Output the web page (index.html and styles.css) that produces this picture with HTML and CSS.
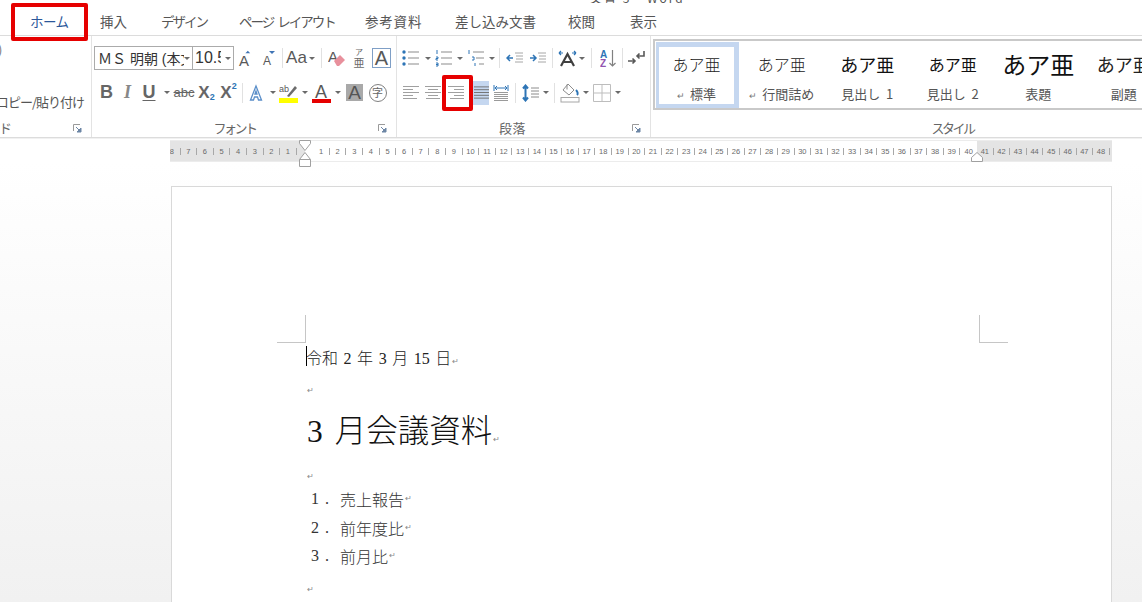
FILE: index.html
```html
<!DOCTYPE html>
<html lang="ja">
<head>
<meta charset="utf-8">
<title>Word</title>
<link rel="stylesheet" href="styles.css">
</head>
<body>
<div class="title"><span>文書 3 - Word</span></div>
<nav class="tabs">
  <span class="tab t-home">ホーム<i class="redbox redbox-tab"></i></span>
  <span class="tab t-ins">挿入</span>
  <span class="tab t-des">デザイン</span>
  <span class="tab t-page">ページ レイアウト</span>
  <span class="tab t-ref">参考資料</span>
  <span class="tab t-mail">差し込み文書</span>
  <span class="tab t-rev">校閲</span>
  <span class="tab t-view">表示</span>
</nav>
<section class="ribbon">
  <div class="group g-clip">
    <div class="clip-top">)</div>
    <div class="clip-copy"><span>書式のコピー/貼り付け</span></div>
    <div class="glabel clip-label"><span>クリップボード</span><svg class="launch" viewBox="0 0 9 9"><use href="#launch"/></svg></div>
  </div>
  <div class="group g-font">
    <div class="row row1 pf1">
      <div class="combo c-font"><span class="combo-text">ＭＳ 明朝 (本文のフォント</span><i class="caret"></i></div>
      <div class="combo c-size"><span class="combo-text">10.5</span><i class="caret"></i></div>
      <span class="c w23"><svg width="16" height="17" viewBox="0 0 16 17"><text x="1" y="16" class="ia ia14">A</text><path d="M8 4l3-3 3 3z" fill="#3f74b5" transform="translate(1 0) scale(.8)"/></svg></span>
      <span class="c w23"><svg width="14" height="16" viewBox="0 0 14 16"><text x="1" y="15" class="ia ia11">A</text><path d="M7 1h6l-3 3z" fill="#3f74b5"/></svg></span>
      <span class="c w4"><i class="sep"></i></span>
      <span class="c w25 aa">Aa</span><span class="c w6"><i class="caret"></i></span>
      <span class="c w12"><i class="sep"></i></span>
      <span class="c w19"><svg width="18" height="18" viewBox="0 0 18 18"><text x="0" y="13" class="ia ia14">A</text><path d="M6 12l6-6 5 5-6 6H9z" fill="#e8909c"/></svg></span>
      <span class="c w26 ruby"><small>ア</small><b>亜</b></span>
      <span class="c w19 boxa">A</span>
    </div>
    <div class="row row2 pf2">
      <span class="c w21 fb">B</span>
      <span class="c w21 fi">I</span>
      <span class="c w22 fu">U</span>
      <span class="c w13"><i class="caret"></i></span>
      <span class="c w22 fs">abc</span>
      <span class="c w23 fx">X<sub>2</sub></span>
      <span class="c w21 fx">X<sup>2</sup></span>
      <span class="c w6"><i class="sep"></i></span>
      <span class="c w22"><svg width="16" height="18" viewBox="0 0 16 18"><path d="M8 2L2.500 16h3l1-3h3l1 3h3zM7 10l1-3 1 3z" fill="#fff" stroke="#5b8fc9" stroke-width="1.300"/></svg></span>
      <span class="c w11"><i class="caret"></i></span>
      <span class="c w21"><svg width="20" height="20" viewBox="0 0 20 20"><text x="0" y="9" class="ia ia9">ab</text><path d="M8 13L16 3l2 2-8 9z" fill="#6d6d6d"/><rect y="15" width="19" height="5" fill="#ffff00"/></svg></span>
      <span class="c w12"><i class="caret"></i></span>
      <span class="c w21"><svg width="20" height="20" viewBox="0 0 20 20"><text x="3" y="15" class="ia ia17">A</text><rect y="16" width="19" height="4" fill="#e60000"/></svg></span>
      <span class="c w11"><i class="caret"></i></span>
      <span class="c w23 shade"><b>A</b></span>
      <span class="c w23"><span class="circle">字</span></span>
    </div>
    <div class="glabel gl-font"><span>フォント</span><svg class="launch" viewBox="0 0 9 9"><use href="#launch"/></svg></div>
  </div>
  <div class="group g-para">
    <div class="row row1 pp">
      <span class="c w26"><svg class="ic" width="18" height="18" viewBox="0 0 18 18"><use href="#bullets"/></svg></span>
      <span class="c w7"><i class="caret"></i></span>
      <span class="c w25"><svg class="ic" width="18" height="18" viewBox="0 0 18 18"><use href="#numbers"/></svg></span>
      <span class="c w7"><i class="caret"></i></span>
      <span class="c w26"><svg class="ic" width="18" height="18" viewBox="0 0 18 18"><use href="#multi"/></svg></span>
      <span class="c w6"><i class="caret"></i></span>
      <span class="c w8"><i class="sep"></i></span>
      <span class="c w24"><svg class="ic" width="18" height="14" viewBox="0 0 18 14"><path d="M7 7h-6m3-3L1 7l3 3" fill="none" stroke="#2e75b6" stroke-width="1.500"/><path d="M9 2h8M10 5h7M10 8h7M9 11h8" stroke="#a6a6a6"/></svg></span>
      <span class="c w21"><svg class="ic" width="18" height="14" viewBox="0 0 18 14"><path d="M1 7h6m-3-3l3 3-3 3" fill="none" stroke="#2e75b6" stroke-width="1.500"/><path d="M9 2h8M10 5h7M10 8h7M9 11h8" stroke="#a6a6a6"/></svg></span>
      <span class="c w8"><i class="sep"></i></span>
      <span class="c w22"><svg width="19" height="17" viewBox="0 0 19 17"><path d="M3 16L9.500 4 16 16M5 12h9" fill="none" stroke="#404040" stroke-width="2.200"/><path d="M1 3h4M1 3l2-2M1 3l2 2M18 3h-4M18 3l-2-2M18 3l-2 2" fill="none" stroke="#2e75b6" stroke-width="1.200"/></svg></span>
      <span class="c w8"><i class="caret"></i></span>
      <span class="c w10"><i class="sep"></i></span>
      <span class="c w24"><svg width="17" height="19" viewBox="0 0 17 19"><text x="0" y="8.500" class="ia az1">A</text><text x="0" y="18" class="ia az2">Z</text><path d="M12.500 1v16m-3-3l3 3 3-3" fill="none" stroke="#808080" stroke-width="1.200"/></svg></span>
      <span class="c w4"><i class="sep"></i></span>
      <span class="c w24"><svg width="19" height="16" viewBox="0 0 19 16"><path d="M17 1v5h-7m2.500-2.500L10 6l2.500 2.500" fill="none" stroke="#595959" stroke-width="1.600"/><path d="M1 11h7M5.500 8.500L8 11l-2.500 2.500" fill="none" stroke="#595959" stroke-width="1.600"/></svg></span>
    </div>
    <div class="row row2 pp">
      <span class="c w25"><svg class="ic" width="16" height="15" viewBox="0 0 16 15"><use href="#al"/></svg></span>
      <span class="c w19"><svg class="ic" width="16" height="15" viewBox="0 0 16 15"><use href="#ac"/></svg></span>
      <span class="c w27"><svg class="ic" width="16" height="15" viewBox="0 0 16 15"><use href="#ar"/></svg></span>
      <span class="c w4"></span>
      <span class="c w16 selbtn"><svg class="ic" width="15" height="15" viewBox="0 0 16 15"><use href="#aj"/></svg></span>
      <span class="c w23"><svg width="16" height="18" viewBox="0 0 16 18"><path d="M1 1v6M15 1v6M2 4h12M4 2L2 4l2 2M12 2l2 2-2 2" fill="none" stroke="#2e75b6"/><path d="M1 8.500h14M1 10.500h14M1 12.500h14M1 14.500h14M1 16.500h14" stroke="#9a9a9a"/></svg></span>
      <span class="c w6"><i class="sep"></i></span>
      <span class="c w25"><svg width="18" height="18" viewBox="0 0 18 18"><path d="M3.500 2v14M1 4.500L3.500 1.500 6 4.500M1 13.500l2.500 3 2.500-3" fill="none" stroke="#2e75b6" stroke-width="2"/><path d="M9 4h8M9 7h8M9 10h8M9 13h8" stroke="#8c8c8c"/></svg></span>
      <span class="c w6"><i class="caret"></i></span>
      <span class="c w10"><i class="sep"></i></span>
      <span class="c w21"><svg width="20" height="20" viewBox="0 0 20 20"><path d="M8 1l6 6-5 5-6-5zM7 1.500v5" fill="#fff" stroke="#8c8c8c"/><path d="M16 7c2 2 2 4 1 5" fill="none" stroke="#2e75b6" stroke-width="2"/><rect x="1" y="14.500" width="18" height="4.500" fill="#fff" stroke="#a6a6a6"/></svg></span>
      <span class="c w12"><i class="caret"></i></span>
      <span class="c w20"><svg width="18" height="18" viewBox="0 0 18 18"><path d="M.5.5h17v17H.5zM9 .5v17M.5 9h17" fill="none" stroke="#bdbdbd"/></svg></span>
      <span class="c w12"><i class="caret"></i></span>
      <i class="redbox redbox-right"></i>
    </div>
    <div class="glabel gl-para"><span>段落</span><svg class="launch" viewBox="0 0 9 9"><use href="#launch"/></svg></div>
  </div>
  <div class="group g-style">
    <div class="gallery">
      <div class="sty sel"><span class="pv pv-m">あア亜</span><span class="lb"><em>↵</em>標準</span></div>
      <div class="sty"><span class="pv pv-m">あア亜</span><span class="lb"><em>↵</em>行間詰め</span></div>
      <div class="sty"><span class="pv pv-h1">あア亜</span><span class="lb">見出し 1</span></div>
      <div class="sty"><span class="pv pv-h2">あア亜</span><span class="lb">見出し 2</span></div>
      <div class="sty"><span class="pv pv-t">あア亜</span><span class="lb">表題</span></div>
      <div class="sty"><span class="pv pv-s">あア亜</span><span class="lb">副題</span></div>
    </div>
    <div class="glabel gl-style"><span>スタイル</span></div>
  </div>
</section>
<div class="ruler-wrap">
  <div class="ruler">
    <div class="rz rz-l"><span>8</span><span>7</span><span>6</span><span>5</span><span>4</span><span>3</span><span>2</span><span>1</span></div>
    <div class="rz rz-m"><span>1</span><span>2</span><span>3</span><span>4</span><span>5</span><span>6</span><span>7</span><span>8</span><span>9</span><span>10</span><span>11</span><span>12</span><span>13</span><span>14</span><span>15</span><span>16</span><span>17</span><span>18</span><span>19</span><span>20</span><span>21</span><span>22</span><span>23</span><span>24</span><span>25</span><span>26</span><span>27</span><span>28</span><span>29</span><span>30</span><span>31</span><span>32</span><span>33</span><span>34</span><span>35</span><span>36</span><span>37</span><span>38</span><span>39</span><span>40</span></div>
    <div class="rz rz-r"><span>41</span><span>42</span><span>43</span><span>44</span><span>45</span><span>46</span><span>47</span><span>48</span></div>
    <svg class="marker marker-l" width="12" height="27" viewBox="0 0 12 27"><path d="M.5.500h11v3L6 10.500.5 3.500zM6 12.500l5.500 7v7H.5v-7zM.5 19.500h11" fill="#fff" stroke="#a0a0a0"/></svg>
    <svg class="marker marker-r" width="12" height="10" viewBox="0 0 12 10"><path d="M6 .5l5.500 5v4H.5v-4z" fill="#fff" stroke="#a0a0a0"/></svg>
  </div>
</div>
<main class="canvas">
  <article class="page">
    <i class="crop crop-l"></i><i class="crop crop-r"></i>
    <p class="line first"><i class="cursor"></i>令和 <span class="num">2</span> 年 <span class="num">3</span> 月 <span class="num">15</span> 日<em class="pm">↵</em></p>
    <p class="line empty e1"><em class="pm">↵</em></p>
    <h1 class="head"><span class="num">3</span> 月会議資料<em class="pm">↵</em></h1>
    <p class="line empty e2"><em class="pm">↵</em></p>
    <ol class="items">
      <li><span class="n">1 .</span>売上報告<em class="pm">↵</em></li>
      <li><span class="n">2 .</span>前年度比<em class="pm">↵</em></li>
      <li><span class="n">3 .</span>前月比<em class="pm">↵</em></li>
    </ol>
    <p class="line empty e3"><em class="pm">↵</em></p>
  </article>
</main>
<svg class="defs" width="0" height="0">
  <defs>
    <g id="launch"><path d="M.5 7V.5H7" fill="none" stroke="#9a9a9a"/><path d="M3 3l4 4M8 4v4H4z" stroke="#6d86a5" fill="#6d86a5"/></g>
    <g id="bullets"><path d="M6 3h11M6 9h11M6 15h11" stroke="#8c8c8c" stroke-width="1.200"/><circle cx="2" cy="3" r="1.700" fill="#2e75b6"/><circle cx="2" cy="9" r="1.700" fill="#2e75b6"/><circle cx="2" cy="15" r="1.700" fill="#2e75b6"/></g>
    <g id="numbers"><path d="M6 3h11M6 9h11M6 15h11" stroke="#8c8c8c" stroke-width="1.200"/><path d="M2 1v4M1 8h2v1.500H1V11h2M1 14h2v3H1M1 15.500h2" fill="none" stroke="#2e75b6"/></g>
    <g id="multi"><path d="M6 3h11M9 9h8M12 15h5" stroke="#8c8c8c" stroke-width="1.200"/><path d="M2 1v4M5 8h2v3H5M8 14v3" fill="none" stroke="#2e75b6"/></g>
    <g id="al"><path d="M0 1.500h16M0 4.500h10M0 7.500h16M0 10.500h10M0 13.500h14" stroke="#a0a0a0"/></g>
    <g id="ac"><path d="M0 1.500h16M3 4.500h10M0 7.500h16M3 10.500h10M1 13.500h14" stroke="#a0a0a0"/></g>
    <g id="ar"><path d="M0 1.500h16M6 4.500h10M0 7.500h16M6 10.500h10M2 13.500h14" stroke="#a0a0a0"/></g>
    <g id="aj"><path d="M0 1.500h16M0 4.500h16M0 7.500h16M0 10.500h16M0 13.500h16" stroke="#6f6f6f"/></g>
  </defs>
</svg>
</body>
</html>
```
FILE: styles.css
```css
* { box-sizing: border-box; }
html, body { margin: 0; padding: 0; width: 1142px; height: 602px; overflow: hidden; background: #fff; }
body { font-family: "Noto Sans CJK JP", "Liberation Sans", sans-serif; color: #444; display: flex; flex-direction: column; position: relative; }
.defs { position: absolute; }
em { font-style: normal; }

.title { height: 3px; overflow: hidden; position: relative; flex: none; }
.title span { position: absolute; left: 590px; top: -9px; font-size: 12px; line-height: 14px; color: #555; white-space: pre; letter-spacing: 2px; }

.tabs { height: 33px; flex: none; display: flex; align-items: center; border-bottom: 1px solid #dcdcdc; font-size: 13.500px; color: #555; padding-top: 4px; }
.tab { white-space: nowrap; position: relative; flex: none; }
.t-home { margin-left: 30px; width: 36px; color: #2b579a; letter-spacing: -.5px; }
.t-ins { margin-left: 34px; width: 27px; }
.t-des { margin-left: 34px; width: 46px; letter-spacing: -2px; }
.t-page { margin-left: 32px; width: 94px; letter-spacing: -2px; word-spacing: 3px; }
.t-ref { margin-left: 32px; width: 57px; letter-spacing: .8px; }
.t-mail { margin-left: 33px; width: 80px; }
.t-rev { margin-left: 33px; width: 28px; }
.t-view { margin-left: 34px; width: 28px; }

.redbox { position: absolute; border: 4px solid #e60000; border-radius: 2px; display: block; }
.redbox-tab { left: -19px; top: -8px; width: 77px; height: 38px; }
.redbox-right { left: 45px; top: -5px; width: 31px; height: 36px; }

.ribbon { height: 102px; flex: none; display: flex; border-bottom: 1px solid #dcdcdc; box-shadow: 0 1px 0 #f1f1f1; }
.group { position: relative; display: flex; flex-direction: column; flex: none; border-right: 1px solid #e3e3e3; }
.g-clip { width: 92px; overflow: hidden; }
.g-font { width: 305px; }
.g-para { width: 254px; }
.g-style { flex: 1; min-width: 0; border-right: 0; }

.row { display: flex; align-items: center; flex: none; position: relative; }
.row1 { height: 24px; margin-top: 10px; }
.row2 { height: 25px; margin-top: 10px; }
.pf1 { padding-left: 2px; }
.pf2 { padding-left: 4px; }
.pp { padding-left: 1px; }

.c { display: flex; align-items: center; justify-content: center; flex: none; height: 100%; }
.w4 { width: 4px; } .w6 { width: 6px; } .w7 { width: 7px; } .w8 { width: 8px; } .w10 { width: 10px; }
.w11 { width: 11px; } .w12 { width: 12px; } .w13 { width: 13px; } .w16 { width: 16px; } .w19 { width: 19px; }
.w20 { width: 20px; } .w21 { width: 21px; } .w22 { width: 22px; } .w23 { width: 23px; } .w24 { width: 24px; }
.w25 { width: 25px; } .w26 { width: 26px; } .w27 { width: 27px; }

.caret { display: block; width: 0; height: 0; border-left: 3px solid transparent; border-right: 3px solid transparent; border-top: 3px solid #6a6a6a; flex: none; }
.sep { display: block; width: 1px; height: 20px; background: #e1e1e1; flex: none; }

.combo { height: 24px; border: 1px solid #ababab; display: flex; align-items: center; background: #fff; overflow: hidden; flex: none; position: relative; color: #333; font-family: "Liberation Sans", "Noto Sans CJK JP", sans-serif; }
.combo .caret { position: absolute; right: 2px; top: 10px; }
.c-font { width: 99px; font-size: 14px; padding-left: 3px; }
.c-size { width: 42px; font-size: 16px; padding-left: 2px; margin-left: -1px; }
.combo-text { white-space: nowrap; overflow: hidden; display: block; }
.c-font .combo-text { width: 86px; }
.c-size .combo-text { width: 26px; }

.ia { font-family: "Liberation Sans", sans-serif; fill: #595959; }
.ia14 { font-size: 15px; } .ia11 { font-size: 12px; } .ia9 { font-size: 9px; } .ia17 { font-size: 18px; }
.az1 { font-size: 10px; fill: #2e75b6; font-weight: 700; }
.az2 { font-size: 10px; fill: #9254b0; font-weight: 700; }
.aa { font: 17px "Liberation Sans", sans-serif; color: #595959; }
.ruby { flex-direction: column; line-height: 1; color: #6a6a6a; }
.ruby small { font-size: 8px; height: 8px; line-height: 8px; }
.ruby b { font-size: 11px; font-weight: 400; height: 11px; line-height: 11px; margin-top: 1px; }
.boxa { height: 20px; border: 1px solid #7f9fc6; font: 20px "Liberation Sans", sans-serif; color: #595959; }

.fb, .fi, .fu, .fx, .fs { font-family: "Liberation Sans", sans-serif; color: #666; }
.fb { font-size: 18px; font-weight: 700; }
.fi { font-size: 18px; font-weight: 700; font-style: italic; color: #888; font-family: "Liberation Serif", serif; }
.fu { font-size: 18px; font-weight: 700; text-decoration: underline; text-underline-offset: 2px; }
.fs { font-size: 13px; text-decoration: line-through; }
.fx { font-size: 17px; font-weight: 700; }
.fx sub, .fx sup { font-size: 9px; color: #2e75b6; line-height: 9px; }
.fx sub { transform: translateY(5px); }
.fx sup { transform: translateY(-6px); }
.shade b { width: 17px; height: 17px; background: #a9a9a9; color: #555; font: 19px/17px "Liberation Sans", sans-serif; text-align: center; display: block; }
.circle { width: 18px; height: 18px; border: 1px solid #808080; border-radius: 50%; font-size: 11px; line-height: 15px; text-align: center; color: #666; display: block; }
.selbtn { background: #c5d7f0; height: 24px; }

.glabel { margin-top: auto; height: 20px; display: flex; align-items: center; justify-content: center; position: relative; font-size: 13px; color: #666; }
.gl-font { padding-right: 19px; letter-spacing: -2.500px; }
.gl-para { padding-right: 22px; letter-spacing: .5px; }
.gl-style { padding-left: 112px; letter-spacing: -2.500px; }
.launch { position: absolute; right: 9px; top: 7px; width: 9px; height: 9px; }

.clip-top { position: absolute; left: -2px; top: 6px; font-size: 13px; line-height: 16px; color: #777; }
.clip-copy { position: absolute; right: 7px; top: 57px; font-size: 13px; line-height: 18px; color: #555; white-space: nowrap; letter-spacing: -1px; }
.clip-label { justify-content: flex-end; }
.clip-label span { position: absolute; right: 79px; white-space: nowrap; }

.gallery { margin: 3px 0 0 2px; height: 71px; border: 1px solid #c9c9c9; border-width: 2px 0 2px 2px; display: flex; overflow: hidden; padding: 1px 0 0 1px; flex: none; }
.sty { flex: 0 0 85.500px; height: 66px; display: flex; flex-direction: column; align-items: center; padding-top: 6px; color: #444; }
.sty.sel { flex-basis: 83px; border: solid #c5d7f0; border-width: 5px 5px 4px 3px; padding-top: 1px; }
.pv { height: 32px; line-height: 32px; white-space: nowrap; color: #222; flex: none; }
.pv-m { font-size: 16px; font-weight: 300; }
.pv-h1 { font-size: 18px; color: #111; }
.pv-h2 { font-size: 16px; color: #111; }
.pv-t { font-size: 24px; color: #111; }
.pv-s { font-size: 18px; color: #222; }
.lb { font-size: 13px; line-height: 18px; margin-top: 5px; white-space: nowrap; color: #555; word-spacing: 3px; }
.lb em { font-size: 9px; margin-right: 5px; color: #777; }

.ruler-wrap { height: 22px; margin-top: 2px; padding-left: 170px; flex: none; }
.ruler { width: 942px; height: 22px; display: flex; position: relative; background: #fff; border: solid #ececec; border-width: 1px 0; font: 7.500px/7px "Liberation Sans", sans-serif; color: #6a6a6a; }
.rz { display: flex; align-items: center; overflow: hidden; flex: none; height: 100%; }
.rz span { flex: 0 0 16.600px; height: 7px; text-align: center; border-right: 1px solid #a8a8a8; }
.rz-l { width: 135px; background: #e4e4e4; justify-content: flex-end; padding-right: 8.300px; }
.rz-m { width: 672px; padding-left: 8.300px; }
.rz-m span:last-child { border-right: 0; }
.rz-r { width: 135px; background: #e4e4e4; }
.marker { position: absolute; }
.marker-l { left: 129px; top: -1px; }
.marker-r { left: 801px; top: 11px; }

.canvas { flex: 1; min-height: 0; padding: 24px 30px 0 171px; background: linear-gradient(#ffffff, #f1f1f1); overflow: hidden; }
.page { width: 941px; height: 500px; background: #fff; border: 1px solid #d9d9d9; border-bottom: 0; padding: 156px 0 0 134px; position: relative; color: #222; }
.page p, .page h1, .page ol { margin: 0; padding: 0; list-style: none; font-weight: 300; }
.crop { position: absolute; width: 29px; height: 28px; border-bottom: 1px solid #c6c6c6; top: 128px; }
.crop-l { left: 105px; border-right: 1px solid #c6c6c6; }
.crop-r { left: 807px; border-left: 1px solid #c6c6c6; }
.line { font-size: 16px; line-height: 28px; height: 28px; white-space: nowrap; position: relative; padding-left: 1px; word-spacing: 2px; }
.num { font-family: "Liberation Serif", serif; }
.cursor { position: absolute; left: 0; top: 3px; width: 1px; height: 20px; background: #000; }
.pm { font-size: 8px; color: #888; margin-left: 1px; font-family: "DejaVu Sans", sans-serif; }
.empty { height: 16px; line-height: 16px; }
.page .e1 { margin-top: 7px; }
.page .head { font-size: 31.500px; line-height: 44px; height: 44px; padding-left: 1px; margin-top: 12px; color: #111; white-space: nowrap; word-spacing: 5px; }
.page .e2 { margin-top: 14px; }
.page .items { margin-top: 5px; padding-left: 5px; }
.items li { font-size: 16px; line-height: 28.500px; height: 28.500px; white-space: nowrap; color: #333; display: flex; }
.items .n { width: 29px; flex: none; font-family: "Liberation Serif", serif; white-space: pre; word-spacing: 2px; }
.page .e3 { margin-top: 6px; }
```
